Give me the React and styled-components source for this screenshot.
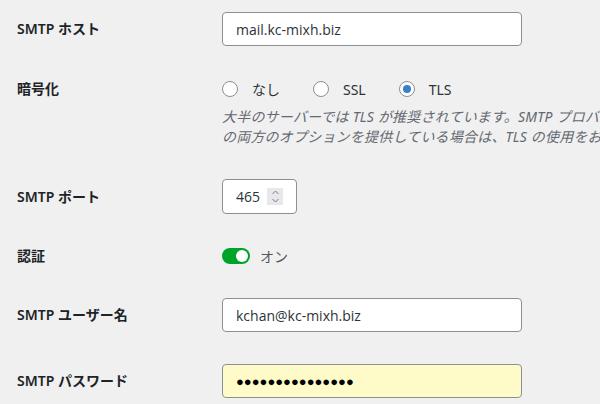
import React from "react";
import styled, { createGlobalStyle } from "styled-components";

const GlobalStyle = createGlobalStyle`
  html, body {
    margin: 0;
    padding: 0;
    background: #f0f0f1;
    overflow: hidden;
  }
  body {
    font-family: "Noto Sans", "Noto Sans CJK JP", sans-serif;
    color: #1d2327;
    font-size: 14px;
  }
`;

const Page = styled.div`
  width: 600px;
  height: 404px;
  box-sizing: border-box;
  padding: 12px 0 0 17px;
  display: flex;
  flex-direction: column;
  gap: 32px;
`;

// one settings row: label column + field column
const Row = styled.div`
  display: grid;
  grid-template-columns: 205px 1fr;
  align-items: ${(p) => (p.$top ? "start" : "center")};
  padding-top: ${(p) => p.$pad || 0}px;
`;

const Label = styled.div`
  font-weight: 600;
  font-size: 14px;
  line-height: 20px;
  color: #1d2327;
  white-space: nowrap;
`;

const Field = styled.div`
  min-width: 0;
`;

const TextInput = styled.input`
  box-sizing: border-box;
  display: block;
  width: 300px;
  height: 34px;
  padding: 0 13px;
  border: 1px solid #8c8f94;
  border-radius: 4px;
  background: ${(p) => (p.$filled ? "#fefbc8" : "#fff")};
  font-family: ${(p) =>
    p.$dots ? '"Liberation Sans", sans-serif' : '"Open Sans", "Noto Sans", sans-serif'};
  font-size: ${(p) => (p.$dots ? "13px" : "14px")};
  color: ${(p) => (p.$dots ? "#000" : "#2c3338")};
  outline: none;
`;

// radio group
const Radios = styled.div`
  display: flex;
  align-items: center;
  gap: 33px;
  height: 20px;
`;

const Option = styled.label`
  display: flex;
  align-items: center;
  gap: 14px;
  font-size: 14px;
  color: #2c3338;
`;

const Radio = styled.span`
  box-sizing: border-box;
  width: 16px;
  height: 16px;
  border-radius: 50%;
  border: 1px solid #8c8f94;
  background: #fff;
  display: flex;
  align-items: center;
  justify-content: center;
  &::after {
    content: "";
    width: 8px;
    height: 8px;
    border-radius: 50%;
    background: ${(p) => (p.$on ? "#3582c4" : "transparent")};
  }
`;

const Desc = styled.p`
  margin: 8px 0 0;
  font-style: italic;
  font-size: 14px;
  line-height: 20px;
  letter-spacing: 0.2px;
  color: #646970;
  white-space: nowrap;
`;

// number input with spinner
const NumberBox = styled.div`
  box-sizing: border-box;
  width: 75px;
  height: 35px;
  border: 1px solid #8c8f94;
  border-radius: 4px;
  background: #fff;
  display: flex;
  align-items: center;
  padding: 0 13px;
  gap: 7px;
  font-family: "Open Sans", "Noto Sans", sans-serif;
  font-size: 14px;
  color: #2c3338;
`;

const Spinner = styled.span`
  width: 17px;
  height: 17px;
  background: #e8e8ec;
  display: flex;
  align-items: center;
  justify-content: center;
`;

const Toggle = styled.span`
  box-sizing: border-box;
  width: 28px;
  height: 16px;
  border-radius: 8px;
  background: #00a32a;
  display: flex;
  align-items: center;
  justify-content: flex-end;
  padding: 0 2px;
  &::after {
    content: "";
    width: 12px;
    height: 12px;
    border-radius: 50%;
    background: #fff;
  }
`;

const Switch = styled.div`
  display: flex;
  align-items: center;
  gap: 10px;
  height: 20px;
  color: #50575e;
  font-size: 14px;
`;

export default function App() {
  return (
    <>
      <GlobalStyle />
      <Page>
        <Row>
          <Label>SMTP ホスト</Label>
          <Field>
            <TextInput type="text" value="mail.kc-mixh.biz" readOnly />
          </Field>
        </Row>

        <Row $top $pad={1}>
          <Label>暗号化</Label>
          <Field>
            <Radios>
              <Option>
                <Radio />
                なし
              </Option>
              <Option>
                <Radio />
                SSL
              </Option>
              <Option>
                <Radio $on />
                TLS
              </Option>
            </Radios>
            <Desc>
              大半のサーバーでは TLS が推奨されています。SMTP プロバイダーが TLS と SSL
              <br />
              の両方のオプションを提供している場合は、TLS の使用をお勧めします。
            </Desc>
          </Field>
        </Row>

        <Row>
          <Label>SMTP ポート</Label>
          <Field>
            <NumberBox>
              465
              <Spinner>
                <svg width="9" height="15" viewBox="0 0 9 15">
                  <path d="M1.5 5 L4.5 2 L7.5 5" fill="none" stroke="#7c7c85" strokeWidth="1" />
                  <path d="M1.5 10 L4.5 13 L7.5 10" fill="none" stroke="#7c7c85" strokeWidth="1" />
                </svg>
              </Spinner>
            </NumberBox>
          </Field>
        </Row>

        <Row>
          <Label>認証</Label>
          <Field>
            <Switch>
              <Toggle />
              オン
            </Switch>
          </Field>
        </Row>

        <Row>
          <Label>SMTP ユーザー名</Label>
          <Field>
            <TextInput type="text" value="kchan@kc-mixh.biz" readOnly />
          </Field>
        </Row>

        <Row>
          <Label>SMTP パスワード</Label>
          <Field>
            <TextInput $filled $dots type="text" value="●●●●●●●●●●●●●●●" readOnly />
          </Field>
        </Row>
      </Page>
    </>
  );
}
